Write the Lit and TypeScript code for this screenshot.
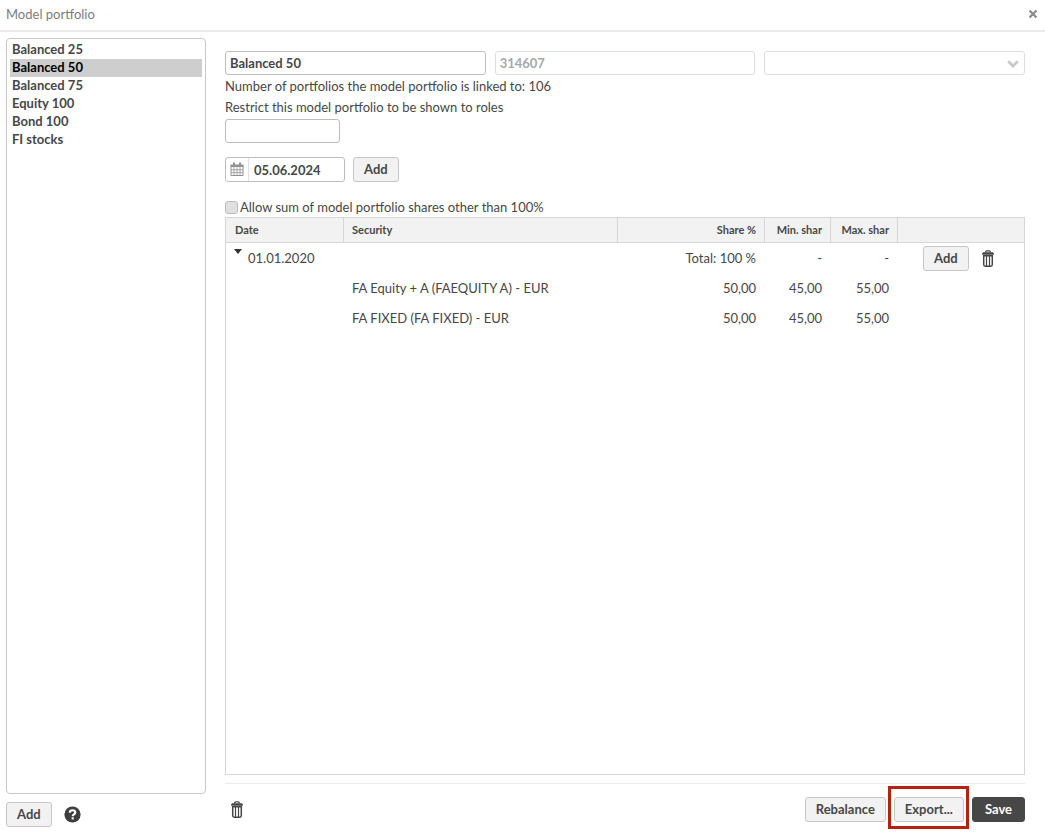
import { LitElement, html, css, svg } from "lit";
import { customElement, state } from "lit/decorators.js";

const trashIcon = svg`
  <svg class="trash" viewBox="0 0 12 17" width="12" height="17" aria-hidden="true">
    <path d="M3.500 2.500Q3.500.8 5 .8H7Q8.500.8 8.500 2.500" fill="none" stroke="currentColor" stroke-width="1.200"/>
    <path d="M1.200 2.200H10.800Q12 2.600 12 4.800H0Q0 2.600 1.200 2.200Z" fill="currentColor"/>
    <path d="M1.700 5.800V14.500Q1.700 16.200 3.200 16.200H8.800Q10.300 16.200 10.300 14.500V5.800Z" fill="none" stroke="currentColor" stroke-width="1.500"/>
    <path d="M4.500 6V16M7.500 6V16" stroke="currentColor" stroke-width="1.200"/>
  </svg>`;

interface Security {
  name: string;
  share: string;
  min: string;
  max: string;
}

@customElement("app-root")
export class AppRoot extends LitElement {
  @state() private selected = "Balanced 50";

  private portfolios = ["Balanced 25", "Balanced 50", "Balanced 75", "Equity 100", "Bond 100", "FI stocks"];

  private securities: Security[] = [
    { name: "FA Equity + A (FAEQUITY A) - EUR", share: "50,00", min: "45,00", max: "55,00" },
    { name: "FA FIXED (FA FIXED) - EUR", share: "50,00", min: "45,00", max: "55,00" },
  ];

  static styles = css`
    :host {
      display: flex;
      flex-direction: column;
      min-height: 100vh;
      box-sizing: border-box;
      background: #fff;
      color: #474747;
      font: 13px/18px Lato, sans-serif;
    }
    *, *::before, *::after { box-sizing: border-box; }
    input, button, select { font: inherit; color: inherit; margin: 0; }
    svg { display: block; }
    .titlebar {
      display: flex;
      align-items: center;
      justify-content: space-between;
      height: 32px;
      padding: 0 7px 2px 6px;
      border-bottom: 2px solid #ebebeb;
    }
    h1 { margin: 0; font-size: 13px; font-weight: 400; color: #7d7d7d; }
    .icon-button {
      display: inline-flex;
      align-items: center;
      justify-content: center;
      padding: 0;
      border: 0;
      background: none;
    }
    .close { color: #8a8a8a; }
    .body {
      flex: 1;
      display: grid;
      grid-template-columns: 200px 1fr;
      column-gap: 19px;
      padding: 6px 20px 6px 6px;
    }
    .side { display: flex; flex-direction: column; }
    .list {
      flex: 1;
      width: 100%;
      padding: 2px 3px;
      border: 1px solid #c9c9c9;
      border-radius: 4px;
      background: #fff;
      outline: none;
      overflow: hidden;
    }
    .list option { height: 18px; min-height: 18px; padding: 0 2px; font-weight: 700; line-height: 18px; }
    .list option:checked { background: #cecece; color: #000; }
    .side-actions { display: flex; align-items: center; gap: 12px; padding-top: 8px; }
    .button {
      height: 25px;
      padding: 0 10px 1px;
      border: 1px solid #c6c6c6;
      border-radius: 3px;
      background: #f2f2f2;
      font-weight: 700;
      line-height: 18px;
    }
    .primary { padding: 0 12px 1px; background: #474747; border-color: #474747; color: #fff; }
    .main { display: flex; flex-direction: column; padding-top: 13px; min-width: 0; }
    .fields { display: grid; grid-template-columns: repeat(3, 1fr); gap: 9px; }
    .field {
      width: 100%;
      height: 24px;
      padding: 0 4px;
      border: 1px solid #bdbdbd;
      border-radius: 3px;
      background: #fff;
      font-weight: 700;
      outline: none;
    }
    .field:disabled { border-color: #dedede; color: #a8a8a8; opacity: 1; }
    .select-wrap { position: relative; }
    .select-wrap select { display: block; appearance: none; }
    .select-wrap svg { position: absolute; right: 6px; top: 8px; pointer-events: none; color: #c8c8c8; }
    .linked { margin: 0; padding-top: 2px; }
    .roles-label { padding: 3px 0; }
    .roles { width: 115px; }
    .date-row { display: flex; gap: 8px; padding: 14px 0 16px; }
    .date {
      display: flex;
      width: 120px;
      height: 25px;
      border: 1px solid #bdbdbd;
      border-radius: 3px;
    }
    .date .icon-button { width: 23px; border-right: 1px solid #e0e0e0; color: #929292; }
    .date input { flex: 1; min-width: 0; padding: 0 5px; border: 0; background: none; font-weight: 700; outline: none; }
    .check { display: flex; align-items: center; gap: 2px; height: 18px; margin-bottom: 1px; }
    .check input {
      appearance: none;
      width: 13px;
      height: 13px;
      border: 1px solid #bdbdbd;
      border-radius: 3px;
      background: #e0e0e0;
    }
    .table-box { flex: 1; border: 1px solid #d6d6d6; }
    table { width: 100%; border-collapse: separate; border-spacing: 0; table-layout: fixed; }
    th {
      height: 25px;
      padding: 0 8px;
      border-right: 1px solid #d6d6d6;
      border-bottom: 1px solid #d6d6d6;
      background: #f2f2f2;
      font-size: 11px;
      font-weight: 700;
      text-align: left;
      white-space: nowrap;
    }
    th:last-child { border-right: 0; }
    td { height: 30px; padding: 0 9px 0 8px; white-space: nowrap; }
    .date-head { padding-left: 9px; }
    .num { text-align: right; }
    .narrow { padding-left: 4px; }
    .col-date { width: 118px; }
    .col-share { width: 147px; }
    .col-min { width: 66px; }
    .col-max { width: 67px; }
    .col-actions { width: 126px; }
    .group { display: flex; align-items: center; gap: 6px; }
    .toggle { align-self: flex-start; }
    .actions { display: flex; align-items: center; gap: 13px; padding-left: 17px; }
    .footer {
      display: flex;
      align-items: center;
      gap: 8px;
      margin-top: 8px;
      padding: 13px 0 5px;
      border-top: 1px solid #ebebeb;
    }
    .footer .icon-button { margin: 0 auto 0 6px; }
    .marked { position: relative; display: flex; }
    .marked::after {
      content: "";
      position: absolute;
      inset: -11px -5px -7px -6px;
      border: 3px solid #b8200f;
      pointer-events: none;
    }
  `;

  private pick(e: Event) {
    this.selected = (e.target as HTMLSelectElement).value;
  }

  render() {
    return html`
      <header class="titlebar">
        <h1>Model portfolio</h1>
        <button class="icon-button close" aria-label="Close">
          <svg viewBox="0 0 10 10" width="10" height="10"><path d="M1.500 1.500 8.500 8.500M8.500 1.500 1.500 8.500" stroke="currentColor" stroke-width="2.200"/></svg>
        </button>
      </header>
      <div class="body">
        <aside class="side">
          <select class="list" size="20" aria-label="Model portfolios" @change=${this.pick}>
            ${this.portfolios.map((p) => html`<option ?selected=${p === this.selected}>${p}</option>`)}
          </select>
          <div class="side-actions">
            <button class="button">Add</button>
            <button class="icon-button" aria-label="Help">
              <svg viewBox="0 0 18 18" width="17" height="17">
                <circle cx="9" cy="9" r="8.600" fill="#3f3f3f"/>
                <path d="M6 7.100Q6.200 4.500 9 4.500T11.900 6.900Q11.900 8.200 10.300 9.100 9.200 9.700 9.200 10.800" fill="none" stroke="#fff" stroke-width="2.200"/>
                <rect x="8.100" y="12" width="2.200" height="2.200" fill="#fff"/>
              </svg>
            </button>
          </div>
        </aside>
        <main class="main">
          <div class="fields">
            <input class="field" aria-label="Name" .value=${this.selected} />
            <input class="field" aria-label="Identifier" value="314607" disabled />
            <div class="select-wrap">
              <select class="field" aria-label="Type" disabled><option></option></select>
              <svg viewBox="0 0 12 10" width="12" height="10"><path d="M1.200 2.200 6 7 10.800 2.200" fill="none" stroke="currentColor" stroke-width="2.800"/></svg>
            </div>
          </div>
          <p class="linked">Number of portfolios the model portfolio is linked to: 106</p>
          <label class="roles-label" for="roles">Restrict this model portfolio to be shown to roles</label>
          <input class="field roles" id="roles" />
          <div class="date-row">
            <div class="date">
              <button class="icon-button" aria-label="Open calendar">
                <svg viewBox="0 0 14 15" width="14" height="15">
                  <path d="M1 4H13V13.500H1Z" fill="none" stroke="currentColor"/>
                  <path d="M.5 2.500H13.500V5H.5Z" fill="currentColor"/>
                  <path d="M4 5V13.500M7 5V13.500M10 5V13.500M1 7.800H13M1 10.600H13" stroke="currentColor" stroke-width=".8"/>
                  <path d="M4 .5V4M10 .5V4" stroke="currentColor" stroke-width="2"/>
                </svg>
              </button>
              <input aria-label="Date" value="05.06.2024" />
            </div>
            <button class="button">Add</button>
          </div>
          <label class="check"><input type="checkbox" />Allow sum of model portfolio shares other than 100%</label>
          <div class="table-box">
            <table>
              <colgroup>
                <col class="col-date" /><col /><col class="col-share" /><col class="col-min" /><col class="col-max" /><col class="col-actions" />
              </colgroup>
              <thead>
                <tr>
                  <th class="date-head">Date</th>
                  <th>Security</th>
                  <th class="num">Share %</th>
                  <th class="num narrow">Min. shar</th>
                  <th class="num narrow">Max. shar</th>
                  <th></th>
                </tr>
              </thead>
              <tbody>
                <tr>
                  <td>
                    <div class="group">
                      <button class="icon-button toggle" aria-label="Collapse">
                        <svg viewBox="0 0 8 5" width="8" height="5"><path d="M0 0H8L4 5Z" fill="#333"/></svg>
                      </button>
                      <span>01.01.2020</span>
                    </div>
                  </td>
                  <td></td>
                  <td class="num">Total: 100 %</td>
                  <td class="num">-</td>
                  <td class="num">-</td>
                  <td>
                    <div class="actions">
                      <button class="button">Add</button>
                      <button class="icon-button" aria-label="Delete row">${trashIcon}</button>
                    </div>
                  </td>
                </tr>
                ${this.securities.map(
                  (s) => html`<tr>
                    <td></td>
                    <td>${s.name}</td>
                    <td class="num">${s.share}</td>
                    <td class="num">${s.min}</td>
                    <td class="num">${s.max}</td>
                    <td></td>
                  </tr>`
                )}
              </tbody>
            </table>
          </div>
          <footer class="footer">
            <button class="icon-button" aria-label="Delete">${trashIcon}</button>
            <button class="button">Rebalance</button>
            <span class="marked"><button class="button">Export...</button></span>
            <button class="button primary">Save</button>
          </footer>
        </main>
      </div>
    `;
  }
}
